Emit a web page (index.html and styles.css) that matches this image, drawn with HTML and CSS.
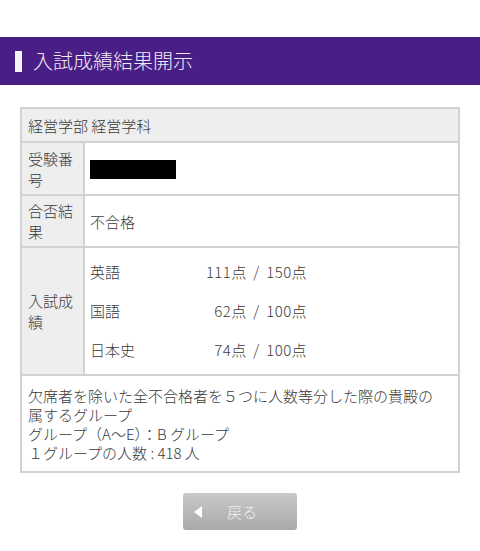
FILE: index.html
```html
<!DOCTYPE html>
<html lang="ja">
<head>
  <meta charset="UTF-8" />
  <meta name="viewport" content="width=device-width, initial-scale=1.0" />
  <title>入試成績結果開示</title>
  <link rel="stylesheet" href="styles.css">
</head>
<body>
  <header class="page-title">
    <h1>入試成績結果開示</h1>
  </header>

  <main class="content">
    <table class="result">
      <tr>
        <th colspan="2" class="faculty">経営学部 経営学科</th>
      </tr>
      <tr class="row-number">
        <th>受験番号</th>
        <td><span class="masked"></span></td>
      </tr>
      <tr class="row-pass">
        <th>合否結果</th>
        <td>不合格</td>
      </tr>
      <tr class="row-scores">
        <th>入試成績</th>
        <td>
          <ul class="scores">
            <li><span class="subject">英語</span><span class="score">111点 / 150点</span></li>
            <li><span class="subject">国語</span><span class="score">62点 / 100点</span></li>
            <li><span class="subject">日本史</span><span class="score">74点 / 100点</span></li>
          </ul>
        </td>
      </tr>
      <tr>
        <td colspan="2" class="group">
          欠席者を除いた全不合格者を５つに人数等分した際の貴殿の属するグループ<br>
          グループ（A〜E）：B グループ<br>
          １グループの人数 : 418 人
        </td>
      </tr>
    </table>

    <div class="actions">
      <a href="#" class="btn-back"><span class="arrow"></span>戻る</a>
    </div>
  </main>
</body>
</html>
```

FILE: styles.css
```css
/* Variables & Reset */
:root {
  --purple: #4a1f85;
  --border: #d2d2d2;
  --label-bg: #eeeeee;
  --text: #3a3a3a;
}
* { margin: 0; padding: 0; box-sizing: border-box; }
body { font-family: "Noto Sans CJK JP", "Noto Sans", sans-serif; font-weight: 300; background: #fff; color: var(--text); font-size: 15px; line-height: 1.4; }
a { text-decoration: none; color: inherit; }

/* Title bar */
.page-title { margin-top: 37px; height: 48px; background: var(--purple); display: flex; align-items: center; padding-left: 15px; }
.page-title h1 { font-size: 20px; font-weight: 300; color: #efe9f6; display: flex; align-items: center; gap: 11px; }
.page-title h1::before { content: ''; width: 7px; height: 21px; background: #f4f4f4; }

/* Result table */
.content { padding: 22px 20px 0; }
.result { width: 440px; border-collapse: collapse; border: 2px solid var(--border); }
.result th, .result td { border: 2px solid var(--border); text-align: left; font-weight: 300; vertical-align: middle; }
.result th { background: var(--label-bg); width: 63px; padding: 0 8px 0 6px; line-height: 21px; }
.result td { padding: 0 5px; }
.result .faculty { height: 34px; width: auto; padding-left: 6px; }
.row-number th, .row-number td { height: 53px; }
.row-pass th, .row-pass td { height: 52px; }
.row-scores th, .row-scores td { height: 128px; }

.masked { display: block; width: 86px; height: 19px; background: #000; margin-top: 2px; }

.scores { list-style: none; display: flex; flex-direction: column; gap: 19px; }
.scores li { display: flex; line-height: 20px; }
.scores .subject { width: 100px; }
.scores .score { width: 117px; text-align: right; letter-spacing: 0.4px; word-spacing: 3px; }

.result .group { padding: 10px 14px 9px 6px; line-height: 19px; }

/* Back button */
.actions { display: flex; justify-content: center; padding-top: 20px; }
.btn-back { position: relative; display: flex; align-items: center; justify-content: center; width: 114px; height: 37px; border-radius: 3px; background: linear-gradient(#c9c9c9, #a9a9a9); color: #f2f2f2; font-size: 15px; padding-left: 4px; }
.btn-back .arrow { position: absolute; left: 11px; top: 13px; width: 0; height: 0; border-top: 6px solid transparent; border-bottom: 6px solid transparent; border-right: 8px solid #fff; }
```
